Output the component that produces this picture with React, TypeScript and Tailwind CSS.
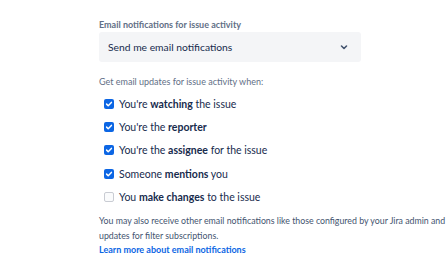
import React from 'react';

const rows: { parts: [string, string, string]; checked: boolean }[] = [
  { parts: ["You're ", 'watching', ' the issue'], checked: true },
  { parts: ["You're the ", 'reporter', ''], checked: true },
  { parts: ["You're the ", 'assignee', ' for the issue'], checked: true },
  { parts: ['Someone ', 'mentions', ' you'], checked: true },
  { parts: ['You ', 'make changes', ' to the issue'], checked: false },
];

const Check: React.FC<{ checked: boolean }> = ({ checked }) =>
  checked ? (
    <span className="w-[10px] h-[10px] rounded-[2px] bg-[#0c66e4] flex items-center justify-center shrink-0">
      <svg width="8" height="8" viewBox="0 0 8 8" fill="none">
        <path d="M1.6 4.1l1.6 1.6 3.2-3.3" stroke="white" strokeWidth="1.5" strokeLinecap="round" strokeLinejoin="round" />
      </svg>
    </span>
  ) : (
    <span className="w-[10px] h-[10px] rounded-[2px] border border-[#c9ccd3] bg-[#fafbfc] shrink-0" />
  );

export default function App() {
  return (
    <div className="w-[448px] h-[273px] bg-white overflow-hidden font-['Lato',sans-serif] text-[#172b4d]">
      <div className="pl-[99px] pt-[18px]">
        <div className="h-[14px] flex items-center text-[9px] font-bold text-[#626f86]">
          Email notifications for issue activity
        </div>
        <div className="w-[262px] h-[30px] rounded-[3px] bg-[#f4f5f7] flex items-center justify-between pl-[9px] pr-[12px]">
          <span className="text-[10.3px] leading-[16px]">Send me email notifications</span>
          <svg width="10" height="10" viewBox="0 0 10 10" fill="none">
            <path d="M2.5 4l2.5 2.5L7.5 4" stroke="#44546f" strokeWidth="1.6" strokeLinecap="round" strokeLinejoin="round" />
          </svg>
        </div>
        <div className="mt-[13px] h-[14px] flex items-center text-[9px] text-[#626f86]">
          Get email updates for issue activity when:
        </div>
        <div className="mt-[3px] pl-[5px] flex flex-col">
          {rows.map((r, i) => (
            <div key={i} className="h-[23.4px] flex items-center gap-[5px]">
              <Check checked={r.checked} />
              <span className="text-[10.5px] leading-[16px]">
                {r.parts[0]}
                <span className="font-bold">{r.parts[1]}</span>
                {r.parts[2]}
              </span>
            </div>
          ))}
        </div>
        <div className="mt-[4px] w-[349px] text-[8.8px] leading-[15px] text-[#44546f]">
          You may also receive other email notifications like those configured by your Jira admin and updates for filter subscriptions.
        </div>
        <div className="text-[9px] leading-[14px] font-bold text-[#0c66e4]">
          Learn more about email notifications
        </div>
      </div>
    </div>
  );
}
